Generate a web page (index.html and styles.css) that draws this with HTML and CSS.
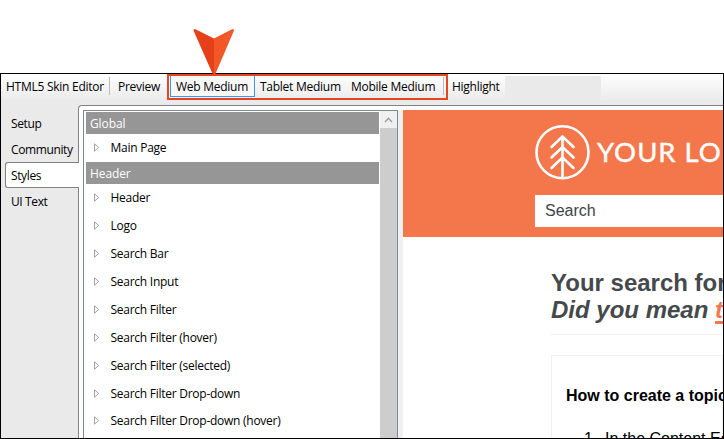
FILE: index.html
```html
<!DOCTYPE html>
<html lang="en">
<head>
<meta charset="utf-8">
<title>HTML5 Skin Editor</title>
<link rel="stylesheet" href="styles.css">
</head>
<body>
<main class="window">
  <header class="toolbar">
    <span class="tool title">HTML5 Skin Editor</span>
    <span class="tool preview">Preview</span>
    <div class="mediums">
      <span class="medium web">Web Medium</span>
      <span class="medium tablet">Tablet Medium</span>
      <span class="medium mobile">Mobile Medium</span>
    </div>
    <span class="tool highlight">Highlight</span>
    <span class="combo"></span>
  </header>
  <div class="body">
    <nav class="tabs">
      <span class="tab">Setup</span>
      <span class="tab">Community</span>
      <span class="tab active">Styles</span>
      <span class="tab">UI Text</span>
    </nav>
    <div class="panel">
      <section class="list">
        <div class="items">
          <h2 class="group">Global</h2>
          <div class="item"><svg class="tri" viewBox="0 0 6 9"><path d="M.5.8v7.4L4.7 4.5z"/></svg>Main Page</div>
          <h2 class="group">Header</h2>
          <div class="item"><svg class="tri" viewBox="0 0 6 9"><path d="M.5.8v7.4L4.7 4.5z"/></svg>Header</div>
          <div class="item"><svg class="tri" viewBox="0 0 6 9"><path d="M.5.8v7.4L4.7 4.5z"/></svg>Logo</div>
          <div class="item"><svg class="tri" viewBox="0 0 6 9"><path d="M.5.8v7.4L4.7 4.5z"/></svg>Search Bar</div>
          <div class="item"><svg class="tri" viewBox="0 0 6 9"><path d="M.5.8v7.4L4.7 4.5z"/></svg>Search Input</div>
          <div class="item"><svg class="tri" viewBox="0 0 6 9"><path d="M.5.8v7.4L4.7 4.5z"/></svg>Search Filter</div>
          <div class="item"><svg class="tri" viewBox="0 0 6 9"><path d="M.5.8v7.4L4.7 4.5z"/></svg>Search Filter (hover)</div>
          <div class="item"><svg class="tri" viewBox="0 0 6 9"><path d="M.5.8v7.4L4.7 4.5z"/></svg>Search Filter (selected)</div>
          <div class="item"><svg class="tri" viewBox="0 0 6 9"><path d="M.5.8v7.4L4.7 4.5z"/></svg>Search Filter Drop-down</div>
          <div class="item last"><svg class="tri" viewBox="0 0 6 9"><path d="M.5.8v7.4L4.7 4.5z"/></svg>Search Filter Drop-down (hover)</div>
        </div>
        <div class="scroll"><div class="up"><svg width="9" height="6" viewBox="0 0 9 6"><path d="M1 5l3.5-3.7L8 5"/></svg></div></div>
      </section>
      <div class="splitter"></div>
      <section class="page">
        <div class="hero">
          <div class="brand">
            <svg class="mark" viewBox="0 0 56 56"><circle cx="27.500" cy="28.300" r="26"/><path d="M27.500 12.500v41M16.500 23L27.500 12.500 38.500 23M16.500 33.500L27.500 23l11 10.500M16.500 44l11-10.500 11 10.500"/></svg>
            <span class="name">YOUR LO</span>
          </div>
          <div class="search">Search</div>
        </div>
        <div class="results">
          <h1>Your search for</h1>
          <p class="mean">Did you mean <a>t</a></p>
          <article class="card">
            <h3>How to create a topic</h3>
            <p class="step"><span class="num">1.</span>In the Content Ed</p>
          </article>
        </div>
      </section>
    </div>
  </div>
</main>
<div class="callout"></div>
<svg class="arrow" viewBox="0 0 42 48"><path fill="#e6401b" d="M2 1Q0 1 .7 3L19 44.500Q20 47 21 47V10.500z"/><path fill="#f35627" d="M39.500 1Q41.500 1 40.800 3L23 44.500Q22 47 21 47V10.500z"/></svg>
</body>
</html>
```
FILE: styles.css
```css
* { box-sizing: border-box; }
body {
  margin: 0;
  width: 724px;
  height: 439px;
  padding-top: 73px;
  overflow: hidden;
  background: #fff;
  color: #000;
  font: 12px/16px "Open Sans", "Noto Sans", sans-serif;
  letter-spacing: -0.26px;
  white-space: nowrap;
}
h1, h2, h3, p { margin: 0; }
.window {
  height: 366px;
  border: 1px solid #000;
  display: flex;
  flex-direction: column;
  overflow: hidden;
  background: #eaeaea;
}
.toolbar {
  height: 31px;
  flex: none;
  display: flex;
  align-items: flex-start;
  background: linear-gradient(#fff, #eaeaea 27px);
}
.tool { height: 18px; margin-top: 3px; padding-top: 2px; }
.title { width: 109px; padding-left: 5px; border-right: 1px solid #bbb; }
.preview { width: 57px; padding-left: 8px; }
.mediums { width: 277px; height: 26px; display: flex; padding: 1px 0 0 3px; }
.medium { height: 22px; padding-top: 4px; }
.web { width: 85px; padding-left: 5px; border: 1px solid #3996f2; border-top: 0; background: #f8f8f8; }
.tablet { width: 91px; padding-left: 5px; }
.mobile { height: 18px; margin-top: 2px; padding-top: 2px; width: 98px; padding-left: 5px; border-right: 1px solid #bbb; }
.highlight { width: 61px; padding-left: 8px; }
.combo { width: 96px; height: 25px; margin-top: 2px; border-radius: 2px; background: #eaeaea; }
.body { flex: 1; display: flex; min-height: 0; }
.tabs { width: 77px; flex: none; padding: 5px 0 0 4px; letter-spacing: -0.38px; }
.tab { display: block; height: 26px; padding: 6px 0 0 6px; }
.tab.active {
  position: relative;
  width: 74px;
  border: 1px solid #828282;
  border-right: 0;
  border-radius: 3px 0 0 3px;
  background: #fff;
  padding: 5px 0 0 5px;
}
.panel {
  flex: 1;
  display: flex;
  min-width: 0;
  border: 1px solid #828282;
  border-width: 1px 0 0 1px;
  border-radius: 4px 0 0 0;
  background: #fff;
  padding: 4px 0 0 4px;
}
.list {
  width: 315px;
  flex: none;
  display: flex;
  border: 1px solid #828790;
  border-bottom: 0;
  overflow: hidden;
}
.items { width: 295px; padding: 1px 0 0 2px; flex: none; }
.group {
  height: 22px;
  padding: 4px 0 0 4px;
  background: #969696;
  color: #fff;
  font-size: 12px;
  font-weight: 400;
  letter-spacing: -0.1px;
}
.item { height: 28px; display: flex; padding: 6px 0 0 8px; }
.last { padding-top: 5px; }
.tri { width: 6px; height: 9px; margin: 3px 10.500px 0 0; fill: none; stroke: #a3a3a3; stroke-width: 1; }
.scroll { width: 18px; margin-left: 1px; background: #cdcdcd; }
.up { height: 17px; background: #f0f0f0; display: flex; align-items: center; justify-content: center; }
.up svg { fill: none; stroke: #a0a0a0; stroke-width: 1.500; }
.splitter { width: 5px; flex: none; background: #f0f0f0; }
.page { flex: 1; min-width: 0; overflow: hidden; font-family: "Liberation Sans", Arial, sans-serif; letter-spacing: 0; }
.hero { height: 127px; padding: 14px 0 0 132px; background: #f3774a; }
.brand { height: 56px; display: flex; color: #fff; }
.mark { width: 56px; height: 56px; flex: none; fill: none; stroke: #fff; stroke-width: 2.600; stroke-linecap: round; }
.name { margin-left: 6px; font: 27.500px/56px Lato, sans-serif; letter-spacing: 1px; -webkit-text-stroke: .4px #fff; }
.search { height: 32px; margin-top: 15px; padding-left: 10px; background: #fff; color: #3d4449; font-size: 16px; line-height: 32px; }
.results { padding: 32px 0 0 148px; }
h1, .mean { color: #45494b; font-size: 24px; line-height: 27px; font-weight: bold; }
.mean { font-style: italic; height: 39px; border-bottom: 1px solid #f1f1f1; }
.mean a { color: #f4784b; text-decoration: underline; text-decoration-thickness: 3px; text-underline-offset: 3px; }
.card { height: 150px; margin-top: 20px; border: 1px solid #f0f0f0; padding: 30px 0 0 14px; color: #000; }
h3 { font-size: 16px; line-height: 20px; }
.step { display: flex; margin-top: 23px; padding-left: 18px; font-size: 16px; line-height: 20px; }
.num { width: 21px; flex: none; }
.callout { position: absolute; left: 167px; top: 74px; width: 281px; height: 26px; border: 2px solid #e8441d; }
.arrow { position: absolute; left: 193px; top: 28px; width: 42px; height: 48px; }
```
